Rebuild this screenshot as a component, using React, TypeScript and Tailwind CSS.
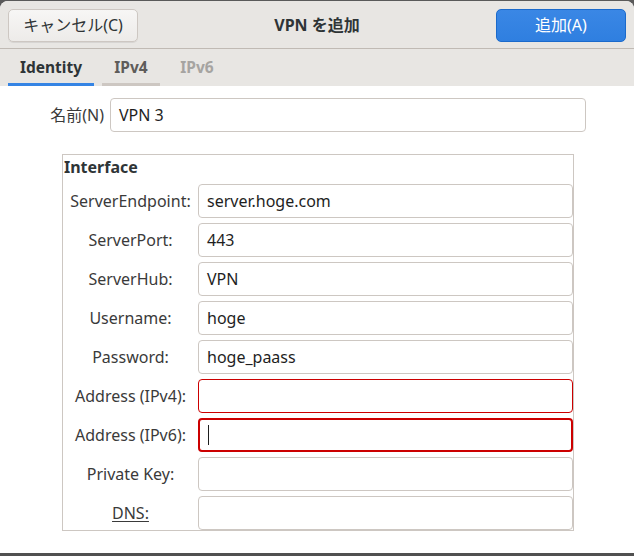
import React from "react"

const font = { fontFamily: '"Noto Sans", "Noto Sans CJK JP", sans-serif' }

interface FieldProps {
  label: string
  value?: string
  state?: "normal" | "error" | "focus"
  underline?: boolean
}

function Field({ label, value, state = "normal", underline }: FieldProps) {
  const border =
    state === "focus"
      ? "border-2 border-[#cc0000] px-[7px]"
      : state === "error"
        ? "border border-[#cc0000] px-[8px]"
        : "border border-[#cdc7c2] px-[8px]"
  return (
    <>
      <div className="flex items-center justify-center text-[16px] text-[#3a3a3a]">
        <span className={underline ? "underline underline-offset-2" : ""}>{label}</span>
      </div>
      <div className={`h-[34px] rounded-[4px] bg-white flex items-center text-[16px] text-[#1e1e1e] ${border}`}>
        {value}
        {state === "focus" && <span className="w-px h-[20px] bg-[#1e1e1e] ml-px" />}
      </div>
    </>
  )
}

export default function App() {
  return (
    <div className="w-[634px] h-[556px] bg-[#5a5a5a] flex flex-col" style={font}>
      <div className="flex-1 flex flex-col mt-px rounded-t-[8px] overflow-hidden bg-white">
        <div className="h-[48px] shrink-0 bg-[#e8e6e3] border-b border-[#c0bab4] flex items-center justify-between px-2">
          <button className="w-[130px] h-[33px] mt-px rounded-[5px] border border-[#cdc7c2] bg-gradient-to-b from-[#f7f6f5] to-[#edebe9] shadow-[0_1px_0_rgba(0,0,0,0.07)] text-[16px] text-[#2e3436]">
            キャンセル(C)
          </button>
          <div className="text-[16px] font-bold text-[#2e3436]">VPN を追加</div>
          <button className="w-[130px] h-[33px] mt-px rounded-[5px] border border-[#1b6acb] bg-gradient-to-b from-[#3a87e5] to-[#2f7fe0] text-[16px] text-white">
            追加(A)
          </button>
        </div>
        <div className="h-[37px] shrink-0 bg-[#e8e6e3] flex items-stretch gap-2 px-2">
          <div className="w-[86px] flex items-center justify-center pt-[3px] border-b-[3px] border-[#3584e4] text-[15.5px] font-bold text-[#2e3436]">
            Identity
          </div>
          <div className="w-[58px] flex items-center justify-center pt-[3px] border-b-[3px] border-[#cdc7c2] text-[15.5px] font-bold text-[#5e5c5a]">
            IPv4
          </div>
          <div className="w-[58px] flex items-center justify-center pt-[3px] border-b-[3px] border-transparent text-[15.5px] font-bold text-[#a6a4a1]">
            IPv6
          </div>
        </div>
        <div className="flex-1 bg-white">
          <div className="flex items-center gap-[6px] pl-[40px] pr-[48px] mt-[12px]">
            <span className="w-[64px] text-right text-[16px] text-[#3a3a3a]">名前(N)</span>
            <div className="flex-1 h-[34px] rounded-[4px] border border-[#cdc7c2] px-[8px] flex items-center text-[16px] text-[#1e1e1e]">
              VPN 3
            </div>
          </div>
          <div className="ml-[62px] mt-[22px] w-[512px] border border-[#cdc7c2]">
            <div className="h-[29px] pl-[1px] pb-[5px] flex items-center text-[16px] font-bold text-[#2e3436]">
              Interface
            </div>
            <div className="grid grid-cols-[135px_375px] gap-y-[5px]">
              <Field label="ServerEndpoint:" value="server.hoge.com" />
              <Field label="ServerPort:" value="443" />
              <Field label="ServerHub:" value="VPN" />
              <Field label="Username:" value="hoge" />
              <Field label="Password:" value="hoge_paass" />
              <Field label="Address (IPv4):" state="error" />
              <Field label="Address (IPv6):" state="focus" />
              <Field label="Private Key:" />
              <Field label="DNS:" underline />
            </div>
          </div>
        </div>
        <div className="h-[3px] shrink-0 bg-[#505050]" />
      </div>
    </div>
  )
}
